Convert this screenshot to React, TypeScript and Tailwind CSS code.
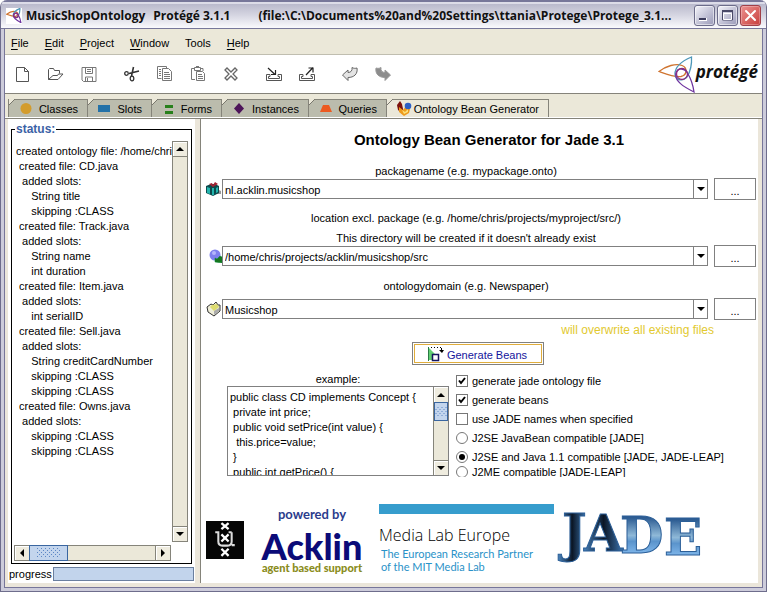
import React from "react";

type Children = { children?: React.ReactNode };

const statusLog = `created ontology file: /home/chris/projects
 created file: CD.java
  added slots:
     String title
     skipping :CLASS
 created file: Track.java
  added slots:
     String name
     int duration
 created file: Item.java
  added slots:
     int serialID
 created file: Sell.java
  added slots:
     String creditCardNumber
     skipping :CLASS
     skipping :CLASS
 created file: Owns.java
  added slots:
     skipping :CLASS
     skipping :CLASS`;

const exampleCode = `public class CD implements Concept {
 private int price;
 public void setPrice(int value) {
  this.price=value;
 }
 public int getPrice() {
  return price;
 }
}`;

function Trefoil({ className, weight }: { className: string; weight: number }) {
  return (
    <svg viewBox="0 0 38 37" className={className} fill="none" strokeWidth={weight} aria-hidden="true">
      <path d="M1 15.500C8 10 18 7 24 9.500C30 12 29 19 23 20.500C17 21.500 8 18 1 15.500Z" stroke="#cf7430" />
      <path d="M33.500 1C24 5 17 11 17 18C17 24 24 26 29 21C32 16 34 9 33.500 1Z" stroke="#4e97b8" />
      <path d="M36 36C26 31 16 25 18 17C20 11 27 12 30 18C33 23 35 29 36 36Z" stroke="#6f35a0" />
      <circle cx="24" cy="18" r="5.500" stroke="#8a2f80" />
    </svg>
  );
}

function TitleBar() {
  return (
    <header className="flex h-[29px] items-center border-b border-[#77779a] bg-linear-to-b from-[#b0b0c5] via-[#d2d2df] to-[#fafafd] px-[5px] pt-[3px] shadow-[inset_0_2px_0_#77779a,inset_0_4px_0_#dcdce8]">
      <span className="mr-[4px] flex h-[16px] w-[16px] shrink-0 items-center justify-center bg-white">
        <Trefoil className="h-[15px] w-[16px]" weight={3} />
      </span>
      <h1 className="flex min-w-0 flex-1 gap-[8px] whitespace-pre font-['Open_Sans',sans-serif] text-[12px] leading-[20px] font-bold text-[#111]">
        <span>MusicShopOntology</span>
        <span className="mr-[20px]">Protégé 3.1.1</span>
        <span>(file:\C:\Documents%20and%20Settings\ttania\Protege\Protege_3.1...</span>
      </h1>
      <div className="flex shrink-0 gap-[2px]">
        <button aria-label="Minimize" className="h-[21px] w-[21px] rounded-[3px] border border-[#6c6c8a] bg-linear-to-br from-[#f4f4fa] to-[#9a9ab8] shadow-[inset_0_0_0_1px_#ffffff88]">
          <svg viewBox="0 0 19 19" className="h-[19px] w-[19px]"><path d="M4 12h8v3H4z" fill="#fff" /><path d="M4 12h7v2H4z" fill="#3c3c5c" /></svg>
        </button>
        <button aria-label="Maximize" className="h-[21px] w-[21px] rounded-[3px] border border-[#6c6c8a] bg-linear-to-br from-[#f4f4fa] to-[#9a9ab8] shadow-[inset_0_0_0_1px_#ffffff88]">
          <svg viewBox="0 0 19 19" className="h-[19px] w-[19px]" fill="none"><path d="M4.500 5h10v9h-10z" stroke="#4a4a68" /><path d="M4 5h11" stroke="#4a4a68" strokeWidth="2" /><path d="M5.500 7.500h8v6h-8z" stroke="#fff" /></svg>
        </button>
        <button aria-label="Close" className="h-[21px] w-[21px] rounded-[3px] border border-[#a04048] bg-linear-to-br from-[#eb9090] to-[#c83c3c] shadow-[inset_0_0_0_1px_#ffffff44]">
          <svg viewBox="0 0 19 19" className="h-[19px] w-[19px]"><path d="M5 5l9 9M14 5l-9 9" stroke="#fff" strokeWidth="2" strokeLinecap="round" /></svg>
        </button>
      </div>
    </header>
  );
}

function MenuBar() {
  const items = ["File", "Edit", "Project", "Window", "Tools", "Help"];
  return (
    <nav className="flex h-[26px] items-center gap-[16px] border-b border-[#c0beb0] bg-[#ebe8d9] pt-[2px] pl-[6px]">
      {items.map((item) => (
        <button key={item}>
          {item === "Tools" ? item : (<><span className="underline underline-offset-2">{item[0]}</span>{item.slice(1)}</>)}
        </button>
      ))}
    </nav>
  );
}

function Tool({ label, children }: Children & { label: string }) {
  return (
    <button aria-label={label} className="flex h-[33px] w-[33px] items-center justify-center">
      <svg viewBox="0 0 16 16" className="h-[16px] w-[16px]" fill="none" stroke="#555">{children}</svg>
    </button>
  );
}

function ToolBar() {
  return (
    <div className="flex h-[39px] items-center justify-between border-b border-[#85837a] bg-white pr-[4px] pl-px">
      <div className="flex gap-[10px]">
        <div className="flex">
          <Tool label="New"><path d="M1.500 1.500h8l4 4v10h-12zM9.500 1.500v4h4" /></Tool>
          <Tool label="Open"><path d="M.5 13.500v-10l1-1h4l1 2h5v3M.5 13.500h9.500l5-5.500h-4.500l-1 1.500H5z" /></Tool>
          <Tool label="Save"><path d="M1 1.500h14v14H2.500L1 14zM4.500 1.500v6h7v-6M4.500 15v-4h7v4M6.500 12v3M6 3.500h4M6 5.500h4" stroke="#777" /></Tool>
        </div>
        <div className="flex">
          <Tool label="Cut"><path d="M9.500 1L7.500 10M15 5L5 7.500" stroke="#333" strokeWidth="1.600" /><circle cx="2.500" cy="7.500" r="1.800" stroke="#333" strokeWidth="1.300" /><ellipse cx="8" cy="12.500" rx="1.800" ry="2.300" stroke="#333" strokeWidth="1.300" /></Tool>
          <Tool label="Copy"><path d="M4.500 12.500h-4v-12h9v2M2 3.500h2M2 5.500h2M2 7.500h2M2 9.500h2M5.500 2.500h6l3 3v9h-9zM7 6.500h5M7 8.500h6M7 10.500h6M7 12.500h6" stroke="#777" /></Tool>
          <Tool label="Paste"><path d="M5 13.500H1.500v-11h3M10 2.500h3V5M4.500 1.500h6v3h-6zM6 .5h3M6.500 5.500h6l2 2v7h-8zM8 8.500h4M8 10.500h5M8 12.500h5" stroke="#777" /></Tool>
          <Tool label="Delete"><path d="M2 4l2-2 4 4 4-4 2 2-4 4 4 4-2 2-4-4-4 4-2-2 4-4z" stroke="#666" strokeWidth="1.300" /></Tool>
        </div>
        <div className="flex">
          <Tool label="Import"><path d="M4 8.500H.5v6h15v-6H12v2h1.500v2h-11v-2H4z" /><path d="M2 2l7 6.500M9.500 4v4.500H5" stroke="#222" strokeWidth="1.200" /></Tool>
          <Tool label="Export"><path d="M4 8.500H.5v6h15v-6H12v2h1.500v2h-11v-2H4z" /><path d="M7 9l7-7.500M9.500 2h4.500V6.500" stroke="#222" strokeWidth="1.200" /></Tool>
        </div>
        <div className="flex">
          <Tool label="Undo"><path d="M.5 9L6 4v2.500C9 6.500 10.500 4.500 10 1.500c1.500 1 3.500 1 5 .5C16 8 12 11.500 6 11.500V14.500z" fill="#e4e4e4" stroke="#666" /></Tool>
          <Tool label="Redo"><path d="M15.500 9L10 4v2.500C7 6.500 5.500 4.500 6 1.500C4.500 2.500 2.500 2.500 1 2C0 8 4 11.500 10 11.500V14.500z" fill="#8c8c8c" stroke="#999" /></Tool>
        </div>
      </div>
      <div className="flex items-center">
        <Trefoil className="h-[37px] w-[38px]" weight={1.3} />
        <span className="pb-[4px] font-['Open_Sans',sans-serif] text-[17px] leading-[24px] font-bold text-[#111] italic">protégé</span>
      </div>
    </div>
  );
}

function Tab({ label, icon, selected, className }: { label: string; icon: React.ReactNode; selected?: boolean; className: string }) {
  return (
    <button
      role="tab"
      aria-selected={!!selected}
      className={`relative flex h-full items-center border-t border-r border-[#85847a] pt-px pr-[9px] ${selected ? "bg-[#ebe8d9]" : "bg-[#bbbcad]"} ${className}`}
    >
      <svg viewBox="0 0 6 6" className="absolute -top-px left-0 h-[6px] w-[6px]">
        <path d="M0 0h6L0 6z" fill="#ebe8d9" />
        <path d="M0 6L6 0" stroke="#77766c" />
      </svg>
      {icon}
      <span className="ml-auto">{label}</span>
    </button>
  );
}

function TabBar() {
  const box = "h-[12px] w-[12px] shrink-0";
  return (
    <div role="tablist" className="flex h-[24px] items-stretch border-b border-[#fff] bg-[#ebe8d9] pt-[5px] pl-[3px]">
      <Tab className="w-[80px] border-l pl-[11px]" label="Classes" icon={<svg viewBox="0 0 12 12" className={box}><circle cx="6" cy="5.500" r="5.500" fill="#d39c2c" /></svg>} />
      <Tab className="w-[64px] pl-[10px]" label="Slots" icon={<svg viewBox="0 0 12 12" className={box}><path d="M0 2h12v7H0z" fill="#2472a8" /></svg>} />
      <Tab className="w-[70px] pl-[11px]" label="Forms" icon={<svg viewBox="0 0 12 12" className={box}><path d="M2 2h8v3H2zM2 8h8v3H2z" fill="#28801c" /></svg>} />
      <Tab className="w-[87px] pl-[11px]" label="Instances" icon={<svg viewBox="0 0 12 12" className={box}><path d="M6 0l5 5.500-5 5.500-5-5.500z" fill="#4d1559" /></svg>} />
      <Tab className="w-[78px] pl-[11px]" label="Queries" icon={<svg viewBox="0 0 12 12" className={box}><path d="M3 2h6l3 7H0z" fill="#ec5a20" /></svg>} />
      <Tab
        selected
        className="w-[162px] pl-[9px]"
        label="Ontology Bean Generator"
        icon={
          <svg viewBox="0 0 16 16" className="h-[16px] w-[16px] shrink-0">
            <path d="M1 4l3-4 2 3 1 5 1 6L2 9z" fill="#7d120c" />
            <path d="M3 6l4 3 3-4 4 3-1 4-5 3-5-4z" fill="#ee9a1c" />
            <path d="M6 9l3 2 3-3v3l-4 2z" fill="#fbe27a" />
            <circle cx="12" cy="5" r="3.300" fill="#2c5fc4" />
          </svg>
        }
      />
    </div>
  );
}

type Dir = "up" | "down" | "left" | "right";
const arrows: Record<Dir, string> = {
  up: "M0 6L4 2l4 4z",
  down: "M0 2h8L4 6z",
  left: "M2 4l4-4v8z",
  right: "M6 4L2 0v8z",
};

function Arrow({ dir }: { dir: Dir }) {
  return <svg viewBox="0 0 8 8" className="h-[8px] w-[8px]"><path d={arrows[dir]} fill="#000" /></svg>;
}

function ScrollButton({ dir, className }: { dir: Dir; className: string }) {
  return (
    <button aria-label={`Scroll ${dir}`} className={`flex shrink-0 items-center justify-center border-[#85847a] bg-[#efecdf] shadow-[inset_1px_1px_0_#fff] ${className}`}>
      <Arrow dir={dir} />
    </button>
  );
}

function Thumb({ className }: { className: string }) {
  return (
    <div className={`flex shrink-0 items-center justify-center border border-[#3a66a0] bg-[#c3d5ed] ${className}`}>
      <svg viewBox="0 0 23 10" preserveAspectRatio="xMidYMid slice" className="h-[10px] w-full max-w-[23px]">
        <g stroke="#5c86c4" strokeDasharray="1 3">
          <path d="M0 .5h23M0 4.500h23M0 8.500h23" />
          <path d="M2 2.500h21M2 6.500h21" />
        </g>
      </svg>
    </div>
  );
}

function StatusPanel() {
  return (
    <aside className="flex w-[187px] shrink-0 flex-col bg-white pt-[3px] pr-px">
      <fieldset className="mr-[2px] ml-[3px] flex min-h-0 min-w-0 flex-1 flex-col border border-black px-[2px] pb-[2px]">
        <legend className="ml-[1px] px-px text-[12px] leading-[14px] font-bold text-[#3b62a6]">status:</legend>
        <div className="flex min-h-0 flex-1 flex-col pt-[5px]">
          <div className="flex flex-1">
            <pre className="w-0 flex-1 overflow-hidden pt-[3px] pl-[2px] font-['Liberation_Sans',Arial,sans-serif] text-[11px] leading-[15px]">{statusLog}</pre>
            <div className="mr-px flex w-[16px] flex-col border border-[#85847a] bg-[#ebe8d9]">
              <ScrollButton dir="up" className="h-[15px] border-b" />
              <div className="flex-1" />
              <ScrollButton dir="down" className="h-[15px] border-t" />
            </div>
          </div>
          <div className="mt-[3px] mr-[18px] flex h-[16px] border border-[#85847a] bg-[#ebe8d9]">
            <ScrollButton dir="left" className="w-[14px]" />
            <Thumb className="-my-px w-[39px]" />
            <div className="flex-1" />
            <ScrollButton dir="right" className="w-[15px] border-l" />
          </div>
        </div>
      </fieldset>
      <div className="flex h-[19px] items-center pl-px">
        <label htmlFor="progress">progress</label>
        <progress id="progress" value={0} max={100} className="ml-px block h-[14px] min-w-0 flex-1 appearance-none border border-[#6a7f9f] bg-[#c2d4ec] [&::-webkit-progress-bar]:bg-[#c2d4ec]" />
      </div>
    </aside>
  );
}

function PathRow({ id, value, icon }: { id: string; value: string; icon: React.ReactNode }) {
  return (
    <div className="flex items-center">
      <span className="flex w-[21px] shrink-0 justify-end">{icon}</span>
      <div className="relative h-[20px] flex-1">
        <select id={id} defaultValue={value} className="h-[20px] w-full appearance-none rounded-none border border-[#808080] bg-white pt-px pr-[16px] pl-[2px] outline-none">
          <option>{value}</option>
        </select>
        <span className="pointer-events-none absolute inset-y-0 right-0 flex w-[15px] items-center justify-center border border-[#808080] bg-white">
          <Arrow dir="down" />
        </span>
      </div>
      <button aria-label={`Browse ${id}`} className="ml-[6px] h-[22px] w-[42px] border border-[#808080] bg-white pt-[3px]">...</button>
    </div>
  );
}

function Choice({ kind, label, checked, className = "h-[19px]" }: { kind: "checkbox" | "radio"; label: string; checked?: boolean; className?: string }) {
  return (
    <label className={`flex items-center gap-[4px] overflow-hidden ${className}`}>
      <span className="grid h-[12px] w-[12px] shrink-0 place-items-center">
        <input
          type={kind}
          name={kind === "radio" ? "target" : undefined}
          defaultChecked={checked}
          className={`peer col-start-1 row-start-1 h-[12px] w-[12px] appearance-none border border-[#777] bg-white ${kind === "radio" ? "rounded-full" : ""}`}
        />
        {kind === "radio" ? (
          <span className="pointer-events-none invisible col-start-1 row-start-1 h-[6px] w-[6px] rounded-full bg-black peer-checked:visible" />
        ) : (
          <svg viewBox="0 0 8 8" className="pointer-events-none invisible col-start-1 row-start-1 h-[8px] w-[8px] peer-checked:visible">
            <path d="M1 3.500l2 2.500 4-5" fill="none" stroke="#000" strokeWidth="2" />
          </svg>
        )}
      </span>
      <span className="whitespace-nowrap">{label}</span>
    </label>
  );
}

function Logos() {
  return (
    <div className="mt-[27px] flex items-start pl-[5px]">
      <svg viewBox="0 0 37 37" className="mt-[17px] h-[38px] w-[38px] shrink-0" role="img" aria-label="University of Amsterdam">
        <path d="M0 0h37v37H0z" fill="#050505" />
        <path d="M15 2l7 6M22 2l-7 6M15 13l7 7M22 13l-7 7M15 27l7 7M22 27l-7 7" stroke="#fff" strokeWidth="2.200" />
        <path d="M9 11h3v9q0 4 4 4h5q4 0 4-4V11M22 11h3M25 23.500h3" fill="none" stroke="#dcdcdc" strokeWidth="2" />
      </svg>
      <div className="mt-[3px] ml-[13px] flex w-[110px] flex-col items-center font-['Lato',sans-serif] whitespace-nowrap">
        <span className="text-[13px] leading-[14px] font-bold text-[#2b3c8c]">powered by</span>
        <span className="mt-[9px] text-[36px] leading-[32px] font-black text-[#0b0b78]">Acklin</span>
        <span className="text-[11px] leading-[12px] font-black text-[#8a8c20]">agent based support</span>
      </div>
      <div className="ml-[12px] w-[175px] whitespace-nowrap">
        <div className="h-[10px] bg-[#369dcd]" />
        <div className="mt-[10px] font-['Open_Sans',sans-serif] text-[16px] leading-[22px] font-light text-black">Media Lab Europe</div>
        <p className="pt-px pl-[2px] font-['Lato',sans-serif] text-[11px] leading-[13px] text-[#2a92c8]">The European Research Partner<br />of the MIT Media Lab</p>
      </div>
      <svg viewBox="0 0 150 62" className="ml-[5px] h-[62px] w-[150px] shrink-0 overflow-visible">
        <defs>
          <linearGradient id="chrome" x1="0" y1="0" x2="0" y2="1">
            <stop offset="0.200" stopColor="#2d5c92" />
            <stop offset="0.500" stopColor="#8fb9d8" />
            <stop offset="0.600" stopColor="#5b94cc" />
            <stop offset="0.850" stopColor="#86bdf0" />
          </linearGradient>
          <linearGradient id="dark" x1="0" y1="0" x2="1" y2="0">
            <stop offset="0" stopColor="#4a86c0" />
            <stop offset="0.500" stopColor="#0b1626" />
            <stop offset="1" stopColor="#3f79b4" />
          </linearGradient>
        </defs>
        <g fontFamily="DejaVu Serif, serif" fontWeight="700" stroke="#2b5f98" strokeWidth="1">
          <text x="3" y="47" fontSize="52" fill="url(#dark)">J</text>
          <text x="25" y="47" fontSize="50" fill="url(#dark)">A</text>
          <text x="61" y="49" fontSize="50" fill="url(#chrome)">D</text>
          <text x="105" y="51" fontSize="50" fill="url(#chrome)">E</text>
        </g>
      </svg>
    </div>
  );
}

function GeneratorPanel() {
  return (
    <main className="min-w-0 flex-1 border-l border-[#85847a] bg-white">
      <form className="pr-[2px]" onSubmit={(e) => e.preventDefault()}>
        <h2 className="pt-[12px] pl-[21px] text-center text-[15px] leading-[18px] font-bold">Ontology Bean Generator for Jade 3.1</h2>
        <label htmlFor="package" className="mt-[16px] mr-[46px] ml-[21px] block text-center leading-[13px]">packagename (e.g. mypackage.onto)</label>
        <PathRow
          id="package"
          value="nl.acklin.musicshop"
          icon={
            <svg viewBox="0 0 16 14" className="mr-px h-[14px] w-[16px]">
              <path d="M5 12h11v-3l-2-1z" fill="#999" />
              <path d="M1 4l5-2h4l4 2v7l-6 3-7-3z" fill="#0c4a4c" />
              <path d="M2 5l3 1v6l-3-1zM7 6h2v7H7zM11 6l2-1v5l-2 1z" fill="#23b5ae" />
              <path d="M4 2l3-1 1 2 2-3 3 2-5 3z" fill="#a32232" />
            </svg>
          }
        />
        <p className="mt-[11px] mr-[46px] ml-[21px] text-center leading-[15px]">location excl. package (e.g. /home/chris/projects/myproject/src/)</p>
        <label htmlFor="location" className="mt-[6px] mr-[46px] ml-[21px] block text-center leading-[13px]">This directory will be created if it doesn't already exist</label>
        <PathRow
          id="location"
          value="/home/chris/projects/acklin/musicshop/src"
          icon={
            <svg viewBox="0 0 13 14" className="h-[14px] w-[13px]">
              <circle cx="6" cy="6" r="5.500" fill="#7f80ee" />
              <circle cx="5" cy="4" r="2" fill="#b5b6fb" />
              <path d="M6 13V9l2 1 3-3 2 1v6z" fill="#17751f" stroke="#083" strokeWidth=".5" />
            </svg>
          }
        />
        <label htmlFor="domain" className="mt-[12px] mr-[46px] mb-[4px] ml-[21px] block text-center leading-[15px]">ontologydomain (e.g. Newspaper)</label>
        <PathRow
          id="domain"
          value="Musicshop"
          icon={
            <svg viewBox="0 0 16 15" className="h-[15px] w-[16px]">
              <path d="M1 5l4-3 2 1 3-3 2 3h2v6l-6 5-6-4z" fill="#eeedd8" stroke="#333" />
              <path d="M4 5l2-2 5-1 2 3-5 4z" fill="#dddc70" />
              <path d="M8 9l5-3v3l-5 4z" fill="#aaa" />
            </svg>
          }
        />
        <p className="mr-[42px] text-right text-[12px] leading-[20px] text-[#e2c92f]">will overwrite all existing files</p>
        <div className="mt-[2px] flex justify-center">
          <button type="submit" className="mr-[2px] flex h-[23px] w-[132px] items-center border border-[#808080] bg-white p-px">
            <span className="flex h-full w-full items-center justify-center gap-[3px] border border-[#e0ad3c] pr-px text-[#14149c]">
              <svg viewBox="0 0 17 16" className="h-[16px] w-[17px] shrink-0">
                <path d="M1 1l7 7v6H1z" fill="#62cf73" />
                <path d="M1 1.500h13" stroke="#000" strokeDasharray="1 2" />
                <path d="M12 4h5l-2 3zM14 2h1v3h-1z" fill="#000" />
                <path d="M5.500 8.500h6v6h-6z" fill="#fff" stroke="#15155c" strokeWidth="1.500" />
                <path d="M1.500 1v14" stroke="#2a7a44" />
              </svg>
              <span className="pt-[3px]">Generate Beans</span>
            </span>
          </button>
        </div>
        <div className="mt-[6px] flex pl-[26px]">
          <div className="w-[222px] shrink-0">
            <label htmlFor="example" className="block h-[15px] pt-px text-center leading-[14px]">example:</label>
            <div className="flex h-[90px] border border-[#808080]">
              <textarea id="example" readOnly defaultValue={exampleCode} className="block min-w-0 flex-1 resize-none overflow-hidden pt-[3px] pl-[2px] leading-[15px] outline-none" />
              <div className="flex w-[15px] flex-col border-l border-[#85847a] bg-[#ebe8d9]">
                <ScrollButton dir="up" className="h-[15px]" />
                <Thumb className="h-[19px]" />
                <div className="flex-1" />
                <ScrollButton dir="down" className="h-[15px] border-t" />
              </div>
            </div>
          </div>
          <div className="ml-[7px]">
            <Choice kind="checkbox" label="generate jade ontology file" checked />
            <Choice kind="checkbox" label="generate beans" checked />
            <Choice kind="checkbox" label="use JADE names when specified" />
            <Choice kind="radio" label="J2SE JavaBean compatible [JADE]" />
            <Choice kind="radio" label="J2SE and Java 1.1 compatible [JADE, JADE-LEAP]" checked />
            <Choice kind="radio" label="J2ME compatible [JADE-LEAP]" className="h-[11px]" />
          </div>
        </div>
      </form>
      <Logos />
    </main>
  );
}

export default function App() {
  return (
    <div className="flex min-h-screen flex-col overflow-hidden rounded-t-[7px] border-x border-b border-[#6e6d8c] bg-[#c9c9d9] font-['Liberation_Sans',Arial,sans-serif] text-[11px] leading-[14px] text-black">
      <TitleBar />
      <div className="flex flex-1 flex-col border-x-3 border-b-3 border-[#cdccdb]">
        <div className="flex flex-1 flex-col border-x border-b border-[#77769a]">
          <MenuBar />
          <ToolBar />
          <TabBar />
          <div className="flex flex-1 gap-[5px] border-t border-[#85847a] bg-[#ebe6da] pr-[4px] pb-[4px] pl-[3px]">
            <StatusPanel />
            <GeneratorPanel />
          </div>
        </div>
      </div>
    </div>
  );
}
